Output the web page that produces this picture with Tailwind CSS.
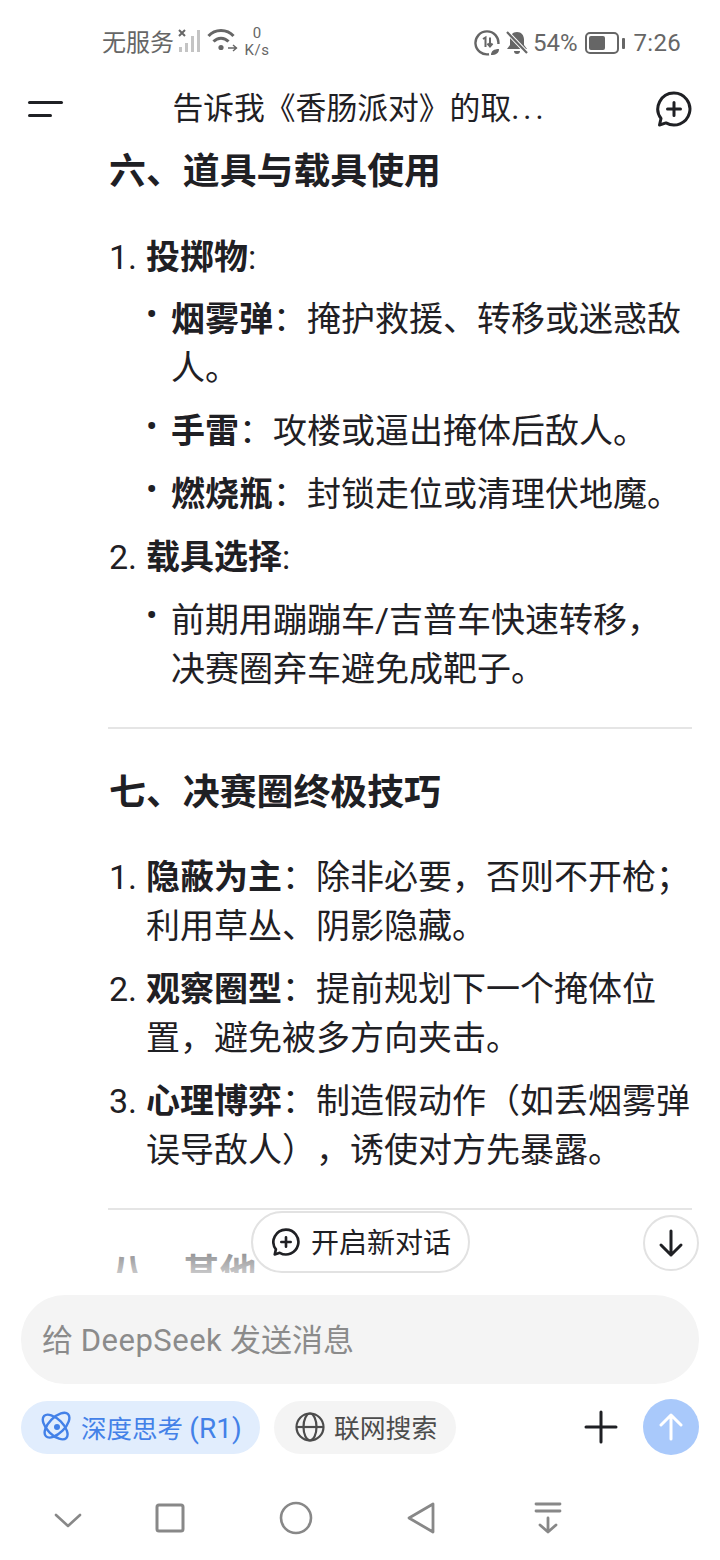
<!DOCTYPE html>
<html lang="zh-CN">

<head>
  <meta charset="UTF-8">
  <meta name="viewport" content="width=device-width, initial-scale=1.0">
  <title>DeepSeek</title>
  <script src="https://cdn.jsdelivr.net/npm/@tailwindcss/browser@4"></script>
</head>

<body class="bg-white overflow-hidden">
  <div class="w-[720px] h-[1560px] flex flex-col bg-white text-[#1f2024] [text-spacing-trim:space-all] font-['Roboto','Noto_Sans_CJK_SC',sans-serif]">

    <!-- 状态栏 -->
    <div class="h-[84px] shrink-0 flex items-start justify-between pl-[102px] pr-[39px] pt-[22px] text-[#666666]">
      <div class="flex items-center h-[40px]">
        <span class="text-[24px] leading-[40px] pt-[2px]">无服务</span>
        <svg class="ml-[4px] -mt-[2px]" width="26" height="26" viewBox="0 0 26 26">
          <path d="M1 2l6 6M7 2L1 8" stroke="#666" stroke-width="2" />
          <g fill="#c4c4c4"><rect x="1" y="19" width="3" height="5" /><rect x="7" y="15" width="3" height="9" /><rect x="13" y="8" width="3" height="16" /><rect x="19" y="2" width="3" height="22" /></g>
        </svg>
        <svg class="ml-[3px] -mt-[2px]" width="31" height="28" viewBox="0 0 31 28" fill="none" stroke="#666" stroke-width="3">
          <path d="M1.500 9C8 1.500 20 1.500 26.500 9" />
          <path d="M6.500 14.500c4.300-4.500 10.700-4.500 15 0" />
          <circle cx="14" cy="20.500" r="2.600" fill="#666" stroke="none" />
          <path d="M21 21h9M26 18l3.500 3-3.500 3" stroke-width="1.400" />
        </svg>
        <div class="ml-[6px] flex flex-col items-center text-[15px] leading-[17px] w-[26px]">
          <span>0</span>
          <span class="tracking-[0.5px]">K/s</span>
        </div>
      </div>
      <div class="flex items-center h-[40px]">
        <svg class="mt-[2px]" width="26" height="26" viewBox="0 0 26 26" fill="none" stroke="#666" stroke-width="2.400">
          <path d="M15 24.200A11.500 11.500 0 1 1 24.400 14" />
          <path d="M9 9l2.500-1.500V17M16 7.500V16M13.500 13.500l2.500 3 2.500-3" stroke-width="2" />
          <path d="M17 25c0-4 3-6 8-6 0 4-3 6-8 6z" fill="#666" stroke="none" />
        </svg>
        <svg class="ml-[5px] mt-[2px]" width="24" height="26" viewBox="0 0 24 26" fill="#666">
          <path d="M12 2c-4.500 0-7 3.500-7 7.500V15l-3 4h20l-3-4V9.500C19 5.500 16.500 2 12 2z" />
          <path d="M9 21a3 3 0 0 0 6 0z" />
          <path d="M2 2l20 21" stroke="#fff" stroke-width="4" />
          <path d="M2 2l20 21" stroke="#666" stroke-width="2.200" />
        </svg>
        <span class="ml-[4px] text-[24px] leading-[40px] pt-[2px]">54%</span>
        <div class="ml-[7px] mt-[2px] flex items-center">
          <div class="w-[34px] h-[22px] border-[2px] border-[#666666] rounded-[5px] p-[2px]">
            <div class="h-full w-[62%] bg-[#666666] rounded-[2px]"></div>
          </div>
          <div class="ml-[3px] w-[3px] h-[11px] bg-[#666666] rounded-[1px]"></div>
        </div>
        <span class="ml-[9px] text-[24px] leading-[40px] tracking-[0.3px] pt-[2px]">7:26</span>
      </div>
    </div>

    <!-- 顶部标题 -->
    <div class="h-[50px] shrink-0 flex items-center justify-between pl-[28px] pr-[28px]">
      <div class="flex flex-col gap-[10px] w-[36px]">
        <div class="h-[3px] w-[35px] bg-[#1f2024] rounded-full"></div>
        <div class="h-[3px] w-[24px] bg-[#1f2024] rounded-full"></div>
      </div>
      <div class="text-[30.800px] leading-[50px]">告诉我《香肠派对》的取<span class="tracking-[4px]">...</span></div>
      <svg width="36" height="36" viewBox="0 0 36 36" fill="none" stroke="#1f2024" stroke-width="3" stroke-linecap="round" stroke-linejoin="round">
        <path d="M18 2a16 16 0 1 1-8 29.900L3.500 34 5 27.500A16 16 0 0 1 18 2z" />
        <path d="M18 11.500v13M11.500 18h13" />
      </svg>
    </div>

    <!-- 回答内容 -->
    <div class="relative flex-1 min-h-0 overflow-hidden pl-[108px] pr-[28px] pt-[13px]">
      <h2 class="ml-[1px] text-[36.900px] leading-[50px] font-bold">六、道具与载具使用</h2>

      <div class="mt-[36px] text-[34px] leading-[49px]">
        <div class="flex">
          <span class="w-[39px] shrink-0 pl-[1px]">1.</span>
          <p class="-ml-[1px]"><b>投掷物</b>:</p>
        </div>
        <ul class="mt-[13px] ml-[38px] flex flex-col gap-[14px]">
          <li class="flex"><span class="w-[25px] shrink-0 -mt-[5px]">•</span><p><b>烟雾弹</b>：掩护救援、转移或迷惑敌人。</p></li>
          <li class="flex"><span class="w-[25px] shrink-0 -mt-[5px]">•</span><p><b>手雷</b>：攻楼或逼出掩体后敌人。</p></li>
          <li class="flex"><span class="w-[25px] shrink-0 -mt-[5px]">•</span><p><b>燃烧瓶</b>：封锁走位或清理伏地魔。</p></li>
        </ul>
        <div class="flex mt-[14px]">
          <span class="w-[39px] shrink-0 pl-[1px]">2.</span>
          <p class="-ml-[1px]"><b>载具选择</b>:</p>
        </div>
        <ul class="mt-[14px] ml-[38px]">
          <li class="flex"><span class="w-[25px] shrink-0 -mt-[5px]">•</span><p>前期用蹦蹦车/吉普车快速转移，决赛圈弃车避免成靶子。</p></li>
        </ul>
      </div>

      <div class="mt-[33px] h-[2px] bg-[#e5e5e5]"></div>

      <h2 class="ml-[1px] mt-[39px] text-[36.900px] leading-[50px] font-bold">七、决赛圈终极技巧</h2>

      <ol class="mt-[35px] text-[34px] leading-[49px] flex flex-col gap-[14px]">
        <li class="flex"><span class="w-[39px] shrink-0 pl-[1px]">1.</span><p class="-ml-[1px]"><b>隐蔽为主</b>：除非必要，否则不开枪；利用草丛、阴影隐藏。</p></li>
        <li class="flex"><span class="w-[39px] shrink-0 pl-[1px]">2.</span><p class="-ml-[1px]"><b>观察圈型</b>：提前规划下一个掩体位置，避免被多方向夹击。</p></li>
        <li class="flex"><span class="w-[39px] shrink-0 pl-[1px]">3.</span><p class="-ml-[1px]"><b>心理博弈</b>：制造假动作（如丢烟雾弹误导敌人），诱使对方先暴露。</p></li>
      </ol>

      <div class="mt-[33px] h-[2px] bg-[#e5e5e5]"></div>

      <h2 class="ml-[1px] mt-[38px] text-[36.900px] leading-[50px] font-bold">八、其他</h2>

      <!-- 底部渐隐 -->
      <div class="absolute left-0 right-0 bottom-0 h-[44px] bg-gradient-to-b from-white/50 to-white"></div>
      <div class="absolute left-0 right-0 bottom-0 h-[22px] bg-white"></div>

      <!-- 悬浮按钮 -->
      <div class="absolute left-[251px] top-[1077px] w-[219px] h-[62px] bg-white border-[2px] border-[#e2e2e2] rounded-full flex items-center pl-[19px]">
        <svg width="28" height="28" viewBox="0 0 36 36" fill="none" stroke="#1f2024" stroke-width="3.400" stroke-linecap="round" stroke-linejoin="round">
          <path d="M18 2a16 16 0 1 1-8 29.900L3.500 34 5 27.500A16 16 0 0 1 18 2z" />
          <path d="M18 12v12M12 18h12" />
        </svg>
        <span class="ml-[11px] pt-[3px] text-[28px] leading-[40px]">开启新对话</span>
      </div>
      <div class="absolute left-[643px] top-[1081px] w-[56px] h-[56px] bg-white border-[2px] border-[#e2e2e2] rounded-full flex items-center justify-center">
        <svg width="26" height="30" viewBox="0 0 26 30" fill="none" stroke="#1f2024" stroke-width="3" stroke-linecap="round" stroke-linejoin="round">
          <path d="M13 3v24M3 17l10 10 10-10" />
        </svg>
      </div>
    </div>

    <!-- 输入框 -->
    <div class="shrink-0 px-[21px]">
      <div class="h-[89px] bg-[#f4f4f4] rounded-[44px] flex items-center pl-[21px] pt-[3px] text-[31px] text-[#8b8b8b]"><span>给 <span class="tracking-[0.5px]">DeepSeek</span> 发送消息</span></div>
      <div class="mt-[16px] h-[54px] flex items-center">
        <div class="w-[239px] h-[53px] bg-[#e1edfd] rounded-full flex items-center pl-[20px] text-[#4381e8]">
          <svg width="32" height="32" viewBox="0 0 32 32" fill="none" stroke="#4381e8" stroke-width="2.600">
            <ellipse cx="16" cy="16" rx="8.500" ry="17" transform="rotate(45 16 16) scale(0.920)" />
            <ellipse cx="16" cy="16" rx="8.500" ry="17" transform="rotate(-45 16 16) scale(0.920)" />
            <circle cx="16" cy="16" r="3" fill="#4381e8" stroke="none" />
          </svg>
          <span class="ml-[8px] pt-[3px] text-[25.500px] leading-[40px]">深度思考 <span class="text-[28px]">(R1)</span></span>
        </div>
        <div class="ml-[14px] w-[182px] h-[53px] bg-[#f4f4f4] rounded-full flex items-center pl-[21px] text-[#4c4c4c]">
          <svg width="30" height="30" viewBox="0 0 30 30" fill="none" stroke="#4c4c4c" stroke-width="2.200">
            <circle cx="15" cy="15" r="13.500" />
            <ellipse cx="15" cy="15" rx="6.500" ry="13.500" />
            <path d="M1.500 15h27" />
          </svg>
          <span class="ml-[9px] pt-[3px] text-[25.800px] leading-[40px]">联网搜索</span>
        </div>
        <svg class="ml-auto" width="34" height="34" viewBox="0 0 34 34" fill="none" stroke="#1f2024" stroke-width="3" stroke-linecap="round">
          <path d="M17 2v30M2 17h30" />
        </svg>
        <div class="ml-[25px] w-[56px] h-[56px] rounded-full bg-[#a9c9fb] flex items-center justify-center">
          <svg width="24" height="30" viewBox="0 0 24 30" fill="none" stroke="#fff" stroke-width="3" stroke-linecap="round" stroke-linejoin="round">
            <path d="M12 27V3M2 13L12 3l10 10" />
          </svg>
        </div>
      </div>
    </div>

    <!-- 系统导航栏 -->
    <div class="h-[106px] shrink-0 flex items-start pt-[48px] pl-[54px]">
      <svg width="28" height="16" viewBox="0 0 28 16" class="mt-[10px]" fill="none" stroke="#888" stroke-width="2.600" stroke-linecap="round" stroke-linejoin="round"><path d="M2 3l12 11L26 3" /></svg>
      <svg width="30" height="32" viewBox="0 0 30 32" class="ml-[73px]" fill="none" stroke="#888" stroke-width="3" stroke-linejoin="round"><rect x="2" y="3" width="26" height="26" rx="2" /></svg>
      <svg width="34" height="34" viewBox="0 0 34 34" class="ml-[94px] -mt-[1px]" fill="none" stroke="#888" stroke-width="2.600"><circle cx="17" cy="17" r="15" /></svg>
      <svg width="30" height="34" viewBox="0 0 30 34" class="ml-[93px] -mt-[1px]" fill="none" stroke="#888" stroke-width="2.800" stroke-linejoin="round"><path d="M27 3v28L3 17z" /></svg>
      <svg width="28" height="34" viewBox="0 0 28 34" class="ml-[98px] -mt-[1px]" fill="none" stroke="#888" stroke-width="2.800" stroke-linecap="round" stroke-linejoin="round"><path d="M2 3h24M2 10h24M14 17v14M6 24l8 7 8-7" /></svg>
    </div>
  </div>
</body>

</html>
